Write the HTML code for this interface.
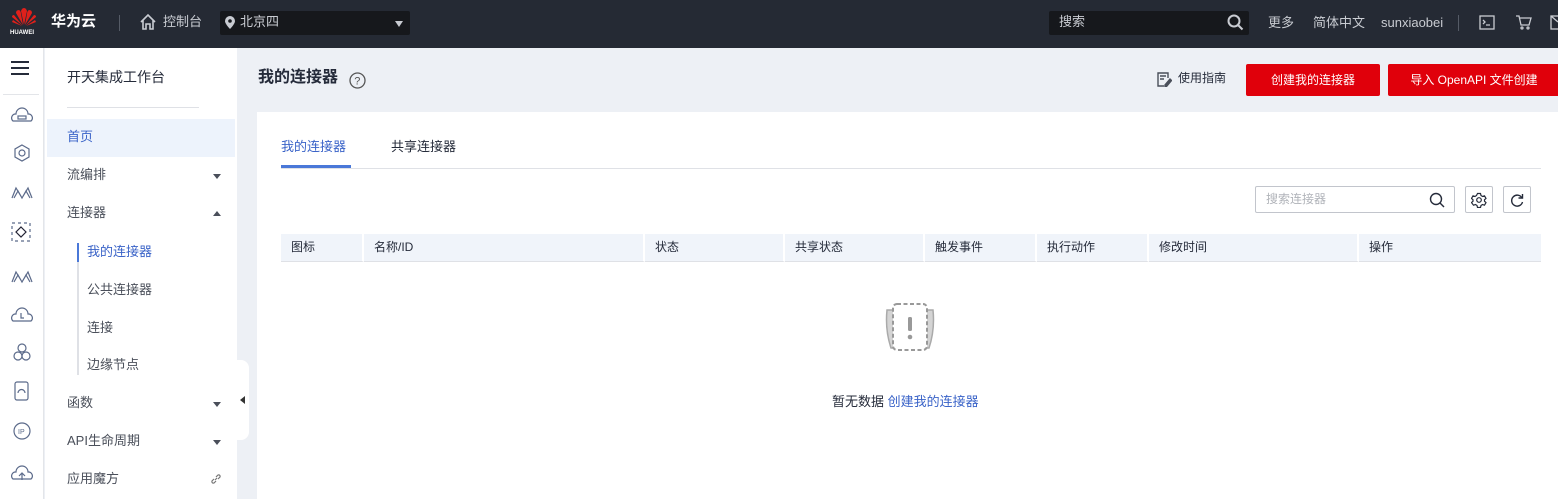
<!DOCTYPE html><html><head><meta charset="utf-8"><style>
*{margin:0;padding:0;box-sizing:border-box}
body{width:1558px;height:499px;overflow:hidden;background:#edf0f5;font-family:"Liberation Sans","Noto Sans CJK SC",sans-serif;font-size:13px;color:#252b3a;position:relative;line-height:1.05}
.a{position:absolute}
.top{left:0;top:0;width:1558px;height:48px;background:#252a34}
.tw{color:#c9ccd2;font-size:13px}
.nav{color:#4a4f5a;font-size:13px}
.th{position:absolute;top:234px;height:28px;line-height:26px;background:#f0f4fa;font-size:12px;color:#252b3a;padding-left:10px;border-right:2px solid #fff;border-bottom:1px solid #dfe1e6}
.tri{width:0;height:0;border-left:4px solid transparent;border-right:4px solid transparent}
</style></head><body>
<div class="a top"></div>
<svg class="a" style="left:11px;top:7px" width="26" height="20" viewBox="0 0 26 20"><g fill="#e0201b"><path d="M13 18 L10 4 Q11 1 13 1Q15 1 16 4Z"/><path d="M12 18 L5 6 Q5 3 8 3Q10 4 10 7Z"/><path d="M14 18 L21 6 Q21 3 18 3Q16 4 16 7Z"/><path d="M11.5 18.5 L1 10 Q1 8 3 8Z"/><path d="M14.5 18.5 L25 10 Q25 8 23 8Z"/><path d="M11 19 L1 15 L2 13Z"/><path d="M15 19 L25 15 L24 13Z"/></g></svg>
<div class="a" style="left:10px;top:30px;font-size:6px;color:#fff;font-weight:bold">HUAWEI</div>
<div class="a" style="left:51px;top:14px;font-size:15px;color:#fff;font-weight:bold">华为云</div>
<div class="a" style="left:119px;top:15px;width:1px;height:16px;background:#555b66"></div>
<svg class="a" style="left:139px;top:13px" width="18" height="18" viewBox="0 0 18 18" fill="none" stroke="#c9ccd2" stroke-width="1.6"><path d="M2 9 L9 2 L16 9 M4 7 V16 H7 V11 H11 V16 H14 V7"/></svg>
<div class="a tw" style="left:163px;top:15px">控制台</div>
<div class="a" style="left:220px;top:11px;width:190px;height:24px;background:#16181c;border-radius:2px"></div>
<svg class="a" style="left:225px;top:16px" width="10" height="13" viewBox="0 0 10 13"><path d="M5 0a5 5 0 0 1 5 5c0 3-5 8-5 8S0 8 0 5a5 5 0 0 1 5-5z" fill="#c9ccd2"/><circle cx="5" cy="5" r="1.8" fill="#16181c"/></svg>
<div class="a tw" style="left:240px;top:15px">北京四</div>
<div class="a tri" style="left:395px;top:21px;border-top:6px solid #c9ccd2"></div>
<div class="a" style="left:1049px;top:11px;width:200px;height:24px;background:#16181c;border-radius:2px"></div>
<div class="a tw" style="left:1059px;top:15px">搜索</div>
<svg class="a" style="left:1227px;top:14px" width="17" height="17" viewBox="0 0 17 17" fill="none" stroke="#c9ccd2" stroke-width="2"><circle cx="7" cy="7" r="5.5"/><path d="M11 11l4.5 4.5"/></svg>
<div class="a tw" style="left:1268px;top:16px">更多</div>
<div class="a tw" style="left:1313px;top:16px">简体中文</div>
<div class="a tw" style="left:1381px;top:16px">sunxiaobei</div>
<div class="a" style="left:1458px;top:15px;width:1px;height:16px;background:#555b66"></div>
<svg class="a" style="left:1479px;top:15px" width="16" height="15" viewBox="0 0 16 15" fill="none" stroke="#c9ccd2" stroke-width="1.3"><rect x="1" y="1" width="14" height="13"/><path d="M4 5l2 2-2 2M7 10h4"/></svg>
<svg class="a" style="left:1515px;top:14px" width="17" height="16" viewBox="0 0 17 16" fill="none" stroke="#c9ccd2" stroke-width="1.3"><path d="M1 2h3l2 9h8l2-7H5"/><circle cx="7" cy="14" r="1"/><circle cx="13" cy="14" r="1"/></svg>
<svg class="a" style="left:1550px;top:15px" width="8" height="15" viewBox="0 0 8 15" fill="none" stroke="#c9ccd2" stroke-width="1.3"><rect x="1" y="1" width="14" height="13"/><path d="M1 1l7 6"/></svg>

<div class="a" style="left:0;top:48px;width:44px;height:451px;background:#fff;border-right:1px solid #e3e5e9"></div>
<div class="a" style="left:11px;top:61px;width:18px;height:2px;background:#252b3a;box-shadow:0 6px 0 #252b3a,0 12px 0 #252b3a"></div>
<div class="a" style="left:3px;top:94px;width:36px;height:1px;background:#e3e5e9"></div>
<svg class="a" style="left:10px;top:105px" width="24" height="380" viewBox="0 0 24 380" fill="none" stroke="#5b6a8a" stroke-width="1.2">
<path d="M3 16a4 4 0 0 1 3-7a6 6 0 0 1 12 0a4 4 0 0 1 3 7z"/><rect x="8" y="11" width="8" height="3"/>
<path d="M12 40l7 4v8l-7 4-7-4v-8z"/><circle cx="12" cy="48" r="3"/>
<path d="M2 93l4-10 6 10 6-10 4 10M4 93l4-7 4 7 4-7 4 7"/>
<rect x="2" y="118" width="18" height="18" stroke-dasharray="3 3"/><path d="M11 122l5 5-5 5-5-5z" stroke="#223"/>
<path d="M2 177l4-10 6 10 6-10 4 10M4 177l4-7 4 7 4-7 4 7"/>
<path d="M3 216a4 4 0 0 1 3-7a6 6 0 0 1 12 0a4 4 0 0 1 3 7z"/><path d="M11 208v5h3"/>
<circle cx="12" cy="243" r="4"/><circle cx="8" cy="251" r="4"/><circle cx="16" cy="251" r="4"/>
<rect x="5" y="277" width="13" height="18" rx="2"/><path d="M8 288a3 3 0 0 1 7 0"/>
<circle cx="12" cy="326" r="8"/><text x="8" y="329" font-size="7" fill="#5b6a8a" stroke="none">IP</text>
<path d="M3 374a4 4 0 0 1 3-7a6 6 0 0 1 12 0a4 4 0 0 1 3 7z"/><path d="M12 375v-6M9 371l3-3 3 3"/>
</svg>

<div class="a" style="left:45px;top:48px;width:192px;height:451px;background:#fff"></div>
<div class="a" style="left:67px;top:70px;font-size:14px">开天集成工作台</div>
<div class="a" style="left:67px;top:107px;width:132px;height:1px;background:#dfe1e6"></div>
<div class="a" style="left:47px;top:119px;width:188px;height:38px;background:#edf3fc"></div>
<div class="a" style="left:67px;top:130px;color:#3a63c8">首页</div>
<div class="a nav" style="left:67px;top:168px">流编排</div><div class="a tri" style="left:213px;top:174px;border-top:5px solid #4a4f5a"></div>
<div class="a nav" style="left:67px;top:206px">连接器</div><div class="a tri" style="left:213px;top:211px;border-bottom:5px solid #4a4f5a"></div>
<div class="a" style="left:77px;top:243px;width:2px;height:132px;background:#dfe1e6"></div>
<div class="a" style="left:77px;top:243px;width:2px;height:19px;background:#4a78d8"></div>
<div class="a" style="left:87px;top:245px;color:#3a63c8">我的连接器</div>
<div class="a nav" style="left:87px;top:283px">公共连接器</div>
<div class="a nav" style="left:87px;top:321px">连接</div>
<div class="a nav" style="left:87px;top:358px">边缘节点</div>
<div class="a nav" style="left:67px;top:396px">函数</div><div class="a tri" style="left:213px;top:402px;border-top:5px solid #4a4f5a"></div>
<div class="a nav" style="left:67px;top:434px">API生命周期</div><div class="a tri" style="left:213px;top:440px;border-top:5px solid #4a4f5a"></div>
<div class="a nav" style="left:67px;top:472px">应用魔方</div>
<svg class="a" style="left:210px;top:473px" width="12" height="12" viewBox="0 0 12 12" fill="none" stroke="#777" stroke-width="1.2"><path d="M5 7l2-2M4 6L2 8a1.5 1.5 0 0 0 2 2l2-2M8 6l2-2a1.5 1.5 0 0 0-2-2L6 4"/></svg>
<div class="a" style="left:237px;top:360px;width:12px;height:80px;background:#fff;border-radius:0 8px 8px 0"></div>
<div class="a" style="left:240px;top:396px;width:0;height:0;border-top:4px solid transparent;border-bottom:4px solid transparent;border-right:5px solid #333"></div>

<div class="a" style="left:258px;top:70px;font-size:16px;font-weight:bold">我的连接器</div>
<svg class="a" style="left:349px;top:72px" width="17" height="17" viewBox="0 0 17 17"><circle cx="8.5" cy="8.5" r="7.5" fill="none" stroke="#555" stroke-width="1.3"/><text x="5.3" y="12.5" font-size="11" fill="#555" font-family="Liberation Sans">?</text></svg>
<svg class="a" style="left:1157px;top:72px" width="15" height="15" viewBox="0 0 15 15" fill="none" stroke="#4a4f5a" stroke-width="1.4"><path d="M11 6V1H1v13h6M3 4h6M3 7h4"/><path d="M8 13l5-6 1.5 1.5-5 6H8z" fill="#4a4f5a"/></svg>
<div class="a" style="left:1178px;top:72px;font-size:12px">使用指南</div>
<div class="a" style="left:1246px;top:64px;width:134px;height:32px;background:#e0000b;color:#fff;font-size:12px;text-align:center;line-height:32px;border-radius:2px">创建我的连接器</div>
<div class="a" style="left:1388px;top:64px;width:172px;height:32px;background:#e0000b;color:#fff;font-size:12px;text-align:center;line-height:32px;border-radius:2px">导入 OpenAPI 文件创建</div>

<div class="a" style="left:257px;top:112px;width:1301px;height:387px;background:#fff"></div>
<div class="a" style="left:281px;top:140px;color:#3a63c8">我的连接器</div>
<div class="a" style="left:391px;top:140px">共享连接器</div>
<div class="a" style="left:281px;top:168px;width:1260px;height:1px;background:#dfe1e6"></div>
<div class="a" style="left:281px;top:165px;width:70px;height:3px;background:#4a78d8"></div>
<div class="a" style="left:1255px;top:186px;width:200px;height:27px;border:1px solid #c2c5cc;border-radius:2px"></div>
<div class="a" style="left:1266px;top:193px;color:#b0b3b9;font-size:12px">搜索连接器</div>
<svg class="a" style="left:1429px;top:192px" width="16" height="16" viewBox="0 0 16 16" fill="none" stroke="#252b3a" stroke-width="1.4"><circle cx="7" cy="7" r="5.5"/><path d="M11 11l4 4"/></svg>
<div class="a" style="left:1465px;top:186px;width:28px;height:27px;border:1px solid #c2c5cc;border-radius:2px"></div>
<svg class="a" style="left:1471px;top:192px" width="16" height="16" viewBox="0 0 16 16" fill="none" stroke="#252b3a" stroke-width="1.2"><path d="M6.5 1.5h3l.5 2 1.5 1 2-.7 1.5 2.6-1.5 1.4v1.4l1.5 1.4-1.5 2.6-2-.7-1.5 1-.5 2h-3l-.5-2-1.5-1-2 .7L.5 10.6 2 9.2V7.8L.5 6.4 2 3.8l2 .7 1.5-1z"/><circle cx="8" cy="8" r="2.3"/></svg>
<div class="a" style="left:1503px;top:186px;width:28px;height:27px;border:1px solid #c2c5cc;border-radius:2px"></div>
<svg class="a" style="left:1509px;top:192px" width="16" height="16" viewBox="0 0 16 16" fill="none" stroke="#252b3a" stroke-width="1.4"><path d="M13 6A5.5 5.5 0 1 0 13.5 10"/><path d="M13.5 2v4h-4"/></svg>

<div class="th" style="left:281px;width:83px">图标</div>
<div class="th" style="left:364px;width:281px">名称/ID</div>
<div class="th" style="left:645px;width:140px">状态</div>
<div class="th" style="left:785px;width:140px">共享状态</div>
<div class="th" style="left:925px;width:112px">触发事件</div>
<div class="th" style="left:1037px;width:112px">执行动作</div>
<div class="th" style="left:1149px;width:210px">修改时间</div>
<div class="th" style="left:1359px;width:182px;border-right:0">操作</div>

<svg class="a" style="left:883px;top:302px" width="54" height="50" viewBox="0 0 54 50"><path d="M4 8 Q2 28 8 46 H46 Q52 28 50 8 Z" fill="#d4d4d4" stroke="#aaa" stroke-width="1.5"/><rect x="10" y="2" width="34" height="46" rx="4" fill="#fff" stroke="#999" stroke-width="2" stroke-dasharray="4 2.5"/><rect x="25" y="15" width="4" height="14" rx="1.5" fill="#999"/><circle cx="27" cy="35" r="2.3" fill="#999"/></svg>
<div class="a" style="left:832px;top:395px">暂无数据 <span style="color:#3a63c8">创建我的连接器</span></div>
</body></html>
